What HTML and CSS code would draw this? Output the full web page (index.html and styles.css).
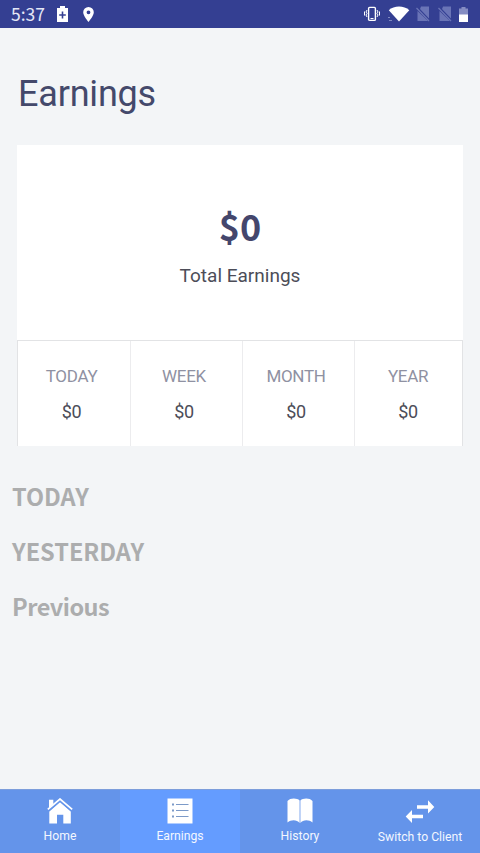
FILE: index.html
```html
<!DOCTYPE html>
<html lang="en">
<head>
    <meta charset="UTF-8">
    <title>Earnings</title>
    <link rel="stylesheet" href="styles.css">
</head>
<body>
<div id="app">
    <div class="status">
        <span class="time">5:37</span>
        <svg class="battery-saver" width="11" height="16" viewBox="0 0 11 16"><path fill="#fff" fill-rule="evenodd" d="M3 0h5v2h3v14H0V2h3zM4.700 5.500v2.700H2.200v1.600h2.500v2.700h1.600V9.800h2.500V8.200H6.300V5.500z"/></svg>
        <svg class="pin" width="11" height="15" viewBox="0 0 11 15"><path fill="#fff" fill-rule="evenodd" d="M5.500 0A5.300 5.300 0 0 0 .2 5.300C.2 9 5.500 15 5.500 15s5.300-6 5.300-9.700A5.300 5.300 0 0 0 5.500 0zm0 3.400a1.900 1.900 0 1 1 0 3.800 1.900 1.900 0 0 1 0-3.800z"/></svg>
        <div class="system">
            <svg width="16" height="16" viewBox="0 0 16 16" fill="none" stroke="#fff"><rect x="4.600" y="1.400" width="6.800" height="13" rx="1" stroke-width="1.400"/><path d="M6.500 12.500h3M3 4l-1 2 1 1.500L2 9l1 2M13 4l1 2-1 1.500L14 9l-1 2M.5 5.500v4M15.500 5.500v4"/></svg>
            <svg class="wifi" width="22" height="16" viewBox="0 0 22 16"><path fill="#fff" d="M.8 4.200C6-.7 16-.7 21.300 4.200L11 15.600z"/><path stroke="#7f88c0" d="M0 11.500h2M1 14.500h3"/></svg>
            <svg class="nosim" width="14" height="16" viewBox="0 0 14 16"><path fill="#6a74b6" d="M5 .5h8v12L4 3zM1.500 5L12 15H1.500z"/><path stroke="#6a74b6" stroke-width="1.300" d="M.5 2l12.500 13"/></svg>
            <svg class="nosim" width="14" height="16" viewBox="0 0 14 16"><path fill="#6a74b6" d="M5 .5h8v12L4 3zM1.500 5L12 15H1.500z"/><path stroke="#6a74b6" stroke-width="1.300" d="M.5 2l12.500 13"/></svg>
            <svg class="battery" width="9" height="15" viewBox="0 0 9 15"><path fill="#858dc3" d="M2.500 0h4v1.500H9V8H0V1.500h2.500z"/><path fill="#fff" d="M0 7.500h9V15H0z"/></svg>
        </div>
    </div>
    <h1>Earnings</h1>
    <div class="card">
        <div class="total">
            <div class="total-num">$0</div>
            <div class="total-text">Total Earnings</div>
        </div>
        <ul class="periods">
            <li><span>TODAY</span><b>$0</b></li>
            <li><span>WEEK</span><b>$0</b></li>
            <li><span>MONTH</span><b>$0</b></li>
            <li><span>YEAR</span><b>$0</b></li>
        </ul>
    </div>
    <div class="list">
        <h2>TODAY</h2>
        <h2>YESTERDAY</h2>
        <h2 class="prev">Previous</h2>
    </div>
    <ul class="tabs">
        <li>
            <svg width="26" height="26" viewBox="0 0 26 26"><path fill="#fff" d="M2 1.800h4.300v5L2 10.300zM13 4.200l10.800 9.300V25.500h-7.500v-8.800h-6.300v8.800H2.300V13.500z"/><path fill="none" stroke="#6494ea" stroke-width="2.600" d="M.8 12.700L13 2l12.200 10.700"/><path fill="none" stroke="#fff" stroke-width="1.700" d="M.8 11.300L13 1l12.200 10.300"/></svg>
            <span>Home</span>
        </li>
        <li class="active">
            <svg width="26" height="26" viewBox="0 0 26 26"><path fill="#fff" d="M.5.5h25v25H.5z"/><path stroke="#7c9ac8" stroke-width="1.100" d="M9 6.500h12.500M9 12.500h12.500M9 18.500h12.500"/><path stroke="#7c9ac8" stroke-width="2" d="M5 6.500h2M5 12.500h2M5 18.500h2"/></svg>
            <span>Earnings</span>
        </li>
        <li>
            <svg width="26" height="26" viewBox="0 0 26 26"><path fill="#fff" d="M.5 3C3-.2 10-.2 12.600 2.500v22.500C10 21.500 4 21.500.5 24.500zM13.400 2.500C16-.2 23-.2 25.500 3v21.500c-3.500-3-9.500-3-12.100.5z"/></svg>
            <span>History</span>
        </li>
        <li class="switch">
            <svg width="30" height="26" viewBox="0 0 30 26"><path fill="#fff" d="M12 7.200h11V2.300L29.300 9 23 15.500v-4.700H12zM18 16.700H7V12L.7 18.500 7 25v-4.700h11z"/></svg>
            <span>Switch to Client</span>
        </li>
    </ul>
</div>
</body>
</html>
```
FILE: styles.css
```css
*{
    margin: 0;
    padding: 0;
    box-sizing: border-box;
}
body{
    background: #f3f5f7;
    font-family: Roboto, sans-serif;
}
ul{
    list-style: none;
}
svg{
    display: block;
}
#app{
    display: flex;
    flex-direction: column;
    height: 853px;
}
.status{
    display: flex;
    align-items: center;
    height: 28px;
    padding: 0 12px 0 11px;
    background: #343f92;
}
.time{
    width: 46px;
    font: 17.5px/28px "Noto Sans CJK SC", sans-serif;
    color: #e4e7f6;
}
.pin{
    margin-left: 15px;
}
.system{
    display: flex;
    align-items: center;
    margin-left: auto;
}
.wifi{
    margin-left: 8px;
}
.nosim{
    margin-left: 6px;
}
.nosim + .nosim{
    margin-left: 8px;
}
.battery{
    margin-left: 7px;
}
h1{
    margin: 44px 0 0 18px;
    height: 45px;
    font-size: 36px;
    line-height: 45px;
    font-weight: 400;
    letter-spacing: -0.2px;
    color: #44496b;
}
.card{
    margin: 28px 17px 0;
    background: #fff;
}
.total{
    height: 195px;
    padding-top: 55px;
    text-align: center;
}
.total-num{
    font: 700 36px/50px "Noto Sans CJK SC", sans-serif;
    color: #44466c;
}
.total-text{
    margin-top: 13px;
    font-size: 19px;
    line-height: 26px;
    color: #4c4d58;
}
.periods{
    display: grid;
    grid-template-columns: 113px 112px 112px 109px;
    height: 106px;
    border: 1px solid #e2e3e5;
    border-bottom: 0;
}
.periods li{
    padding: 23px 5px 0 0;
    text-align: center;
    border-right: 1px solid #ececee;
}
.periods li:last-child{
    padding-right: 3px;
    border-right: 0;
}
.periods span, .periods b{
    display: block;
    font-size: 17px;
    line-height: 24px;
    font-weight: 400;
    letter-spacing: -0.3px;
    color: #8f91a2;
}
.periods b{
    margin-top: 12px;
    font-size: 18px;
    color: #4c4d58;
}
.list{
    padding: 24px 12px 0;
}
h2{
    height: 55px;
    font: 700 23.5px/53px "Noto Sans CJK SC", sans-serif;
    color: #acadae;
}
.prev{
    letter-spacing: -0.5px;
}
.tabs{
    display: grid;
    grid-template-columns: repeat(4, 1fr);
    height: 64px;
    margin-top: auto;
    background: #6494ea;
    border-top: 1px solid #7c9ddb;
}
.tabs li{
    display: flex;
    flex-direction: column;
    align-items: center;
    padding-top: 8px;
}
.tabs .active{
    background: #649cff;
}
.tabs span{
    margin-top: 4px;
    font-size: 12.2px;
    line-height: 16px;
    color: #f3f7ff;
    white-space: nowrap;
}
.tabs .switch span{
    margin-top: 5px;
}
```
